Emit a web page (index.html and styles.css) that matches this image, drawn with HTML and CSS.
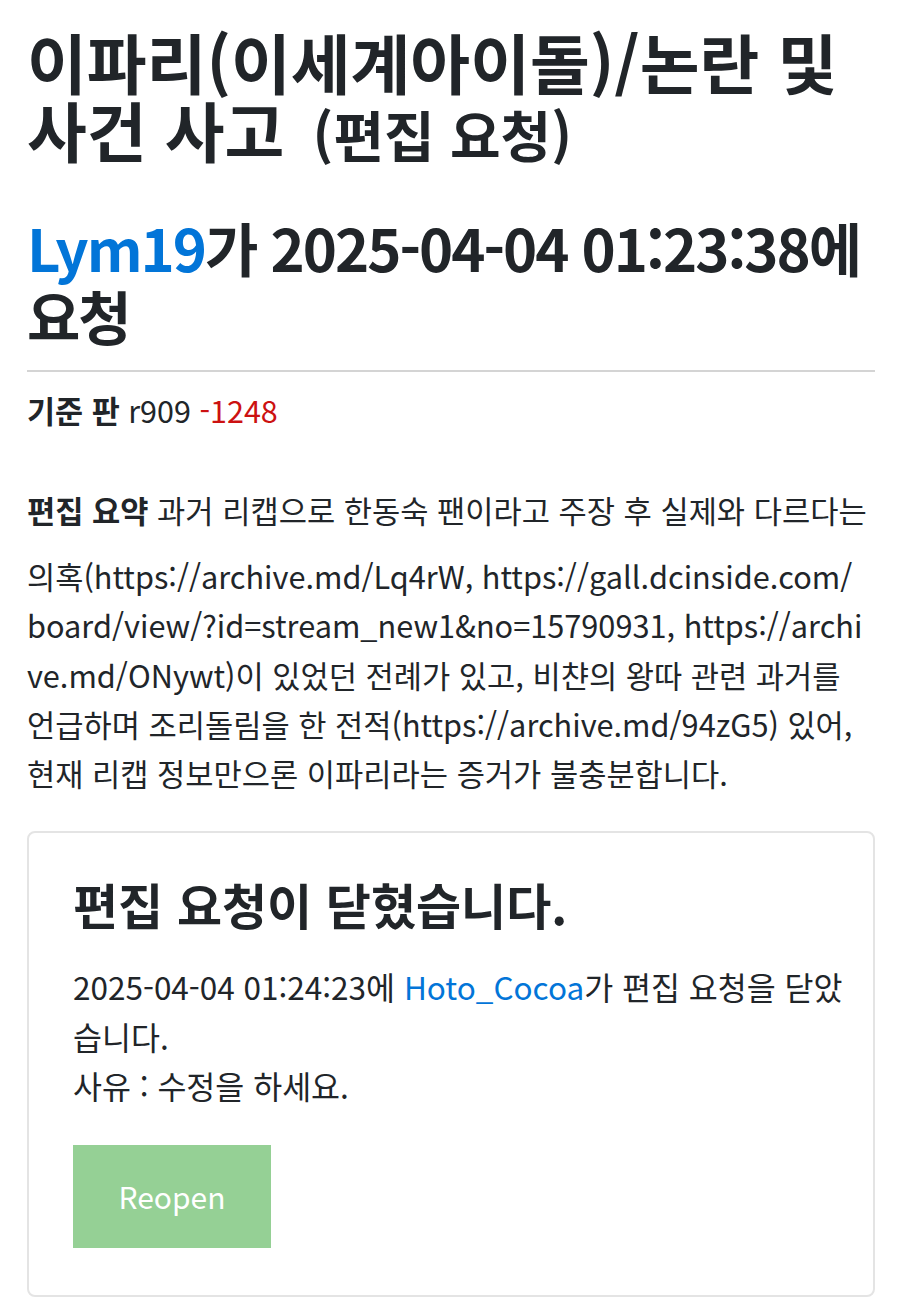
FILE: index.html
```html
<!DOCTYPE html>
<html lang="ko">
<head>
<meta charset="utf-8">
<title>편집 요청</title>
<link rel="stylesheet" href="styles.css">
</head>
<body>
<div class="page">
  <h1 class="title">이파리(이세계아이돌)/논란 및 사건 사고 <small class="title-sub">(편집 요청)</small></h1>
  <h2 class="author"><a class="user" href="#">Lym19</a>가 2025-04-04 01:23:38에 요청</h2>
  <hr class="rule">
  <div class="base"><b>기준 판</b> r909 <span class="minus">-1248</span></div>
  <div class="summary-head"><b>편집 요약</b> 과거 리캡으로 한동숙 팬이라고 주장 후 실제와 다르다는</div>
  <div class="summary">의혹(https://archive.md/Lq4rW, https://gall.dcinside.com/<br>board/view/?id=stream_new1&amp;no=15790931, https://archi<br>ve.md/ONywt)이 있었던 전례가 있고, 비챤의 왕따 관련 과거를<br>언급하며 조리돌림을 한 전적(https://archive.md/94zG5) 있어,<br>현재 리캡 정보만으론 이파리라는 증거가 불충분합니다.</div>
  <div class="card">
    <h3 class="card-title">편집 요청이 닫혔습니다.</h3>
    <p class="card-text">2025-04-04 01:24:23에 <a class="user" href="#">Hoto_Cocoa</a>가 편집 요청을 닫았습니다.<br>사유 : 수정을 하세요.</p>
    <button class="reopen" type="button">Reopen</button>
  </div>
</div>
</body>
</html>
```
FILE: styles.css
```css
html, body {
  margin: 0;
  padding: 0;
  background: #fff;
}
body {
  font-family: "Noto Sans CJK KR", "Noto Sans", sans-serif;
  color: #212529;
}
.page {
  padding: 27px 25px 0 27px;
}
.title {
  margin: 0;
  font-size: 65px;
  line-height: 68px;
  font-weight: 700;
  letter-spacing: 0;
}
.title-sub {
  font-size: 55px;
  font-weight: 700;
  padding-left: 10px;
}
.author {
  margin: 46px 0 0;
  font-size: 58px;
  line-height: 68px;
  font-weight: 700;
  letter-spacing: -2px;
}
.user {
  color: #0275d8;
  text-decoration: none;
}
.rule {
  margin: 21px 0 0;
  border: 0;
  border-top: 2px solid #d4d4d4;
}
.base {
  margin-top: 18px;
  font-size: 30.5px;
  line-height: 40px;
}
.minus {
  color: #cc1111;
}
.summary-head {
  margin-top: 55px;
  font-size: 30.7px;
  line-height: 49px;
  white-space: nowrap;
}
.summary {
  margin-top: 17px;
  font-size: 30.7px;
  line-height: 49.3px;
  white-space: nowrap;
}
.card {
  margin-top: 34px;
  border: 2px solid #e4e4e4;
  border-radius: 8px;
  padding: 41px 20px 47px 44px;
}
.card-title {
  margin: 0;
  font-size: 49px;
  line-height: 60px;
  font-weight: 700;
}
.card-text {
  margin: 28px 0 0;
  font-size: 31.5px;
  line-height: 49.5px;
  word-break: break-all;
}
.reopen {
  display: block;
  margin-top: 34px;
  width: 198px;
  height: 103px;
  border: 0;
  border-radius: 0;
  background: #95d095;
  color: #fff;
  font-family: "Noto Sans CJK KR", "Noto Sans", sans-serif;
  font-size: 30px;
  cursor: pointer;
}
```
